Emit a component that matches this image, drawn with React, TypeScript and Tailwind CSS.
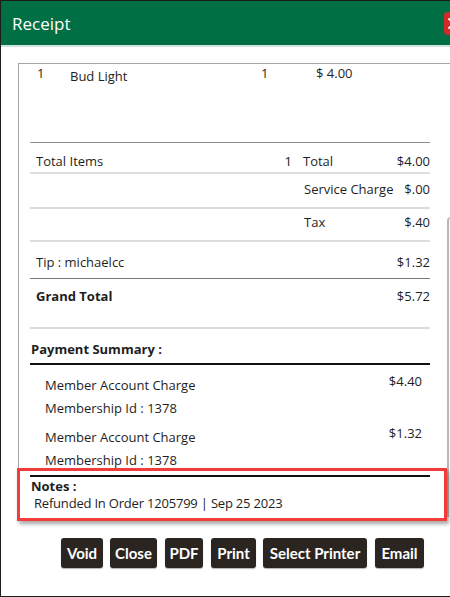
import React from "react";

const body = { fontFamily: '"Open Sans", "Noto Sans", sans-serif' };
const btnFont = { fontFamily: 'Lato, "Open Sans", sans-serif' };

function Btn({ label, w, ml }: { label: string; w: string; ml: string }) {
  return (
    <div
      className={`${w} ${ml} h-[30px] rounded-[3px] bg-[#2b2522] text-white text-[15px] font-bold flex items-center justify-center shadow-[0_1px_1px_rgba(0,0,0,0.3)]`}
      style={btnFont}
    >
      {label}
    </div>
  );
}

export default function App() {
  return (
    <div className="w-[450px] h-[597px] overflow-hidden relative bg-white" style={body}>
      <div className="w-[480px] h-[597px] border border-[#1c1c1c] flex flex-col">
        {/* header */}
        <div className="h-[44px] bg-[#007044] flex items-center pl-[11px] pr-[13px] border-b-2 border-[#cfe4dc] box-content">
          <span className="text-white text-[17px] leading-none pt-[1px]">Receipt</span>
          <div className="ml-auto w-[22px] h-[23px] rounded-[4px] bg-[#d32a2a] flex items-center justify-start pl-[4px]">
            <svg width="11" height="11" viewBox="0 0 11 11">
              <path d="M1 1 L10 10 M10 1 L1 10" stroke="white" strokeWidth="1.8" strokeLinecap="round" />
            </svg>
          </div>
        </div>

        {/* panel */}
        <div className="ml-[17px] mt-[16px] h-[454px] border-l border-t border-[#a6a6a6] flex text-[13px] text-[#1e1e1e]">
          <div className="w-[427px] pl-[11px] pr-[16px] shrink-0">
            {/* items */}
            <div className="h-[78px] flex leading-[18px]">
              <div className="w-[40px] pl-[7px]">1</div>
              <div className="w-[191px] pt-[3px]">Bud Light</div>
              <div className="w-[55px]">1</div>
              <div>$ 4.00</div>
            </div>
            {/* totals */}
            <div className="h-[32px] pt-[9px] border-t border-b-2 border-t-[#8c8c8c] border-b-[#dcdcdc] flex leading-[18px]">
              <div className="w-[262px] pl-[6px] flex justify-between">
                <span>Total Items</span>
                <span>1</span>
              </div>
              <div className="ml-[11px] flex-1">Total</div>
              <div>$4.00</div>
            </div>
            <div className="h-[35px] pt-[6px] border-b-2 border-[#dcdcdc] flex leading-[18px]">
              <div className="ml-[274px] flex-1">Service Charge</div>
              <div>$.00</div>
            </div>
            <div className="h-[33px] pt-[4px] border-b-2 border-[#dcdcdc] flex leading-[18px]">
              <div className="ml-[274px] flex-1">Tax</div>
              <div>$.40</div>
            </div>
            <div className="h-[37px] pt-[11px] border-b border-[#7a7a7a] flex leading-[18px]">
              <div className="pl-[6px] flex-1">Tip : michaelcc</div>
              <div>$1.32</div>
            </div>
            <div className="h-[50px] pt-[8px] border-b-2 border-[#dcdcdc] flex leading-[18px]">
              <div className="pl-[6px] flex-1 font-bold">Grand Total</div>
              <div>$5.72</div>
            </div>
            <div className="h-[36px] pt-[11px] border-b-2 border-[#111] leading-[18px] pl-[1px] font-bold">
              Payment Summary :
            </div>
            <div className="mt-[9px] flex justify-between pl-[15px] pr-[8px]">
              <div className="leading-[23px]">
                <div>Member Account Charge</div>
                <div>Membership Id : 1378</div>
              </div>
              <div className="leading-[15px]">$4.40</div>
            </div>
            <div className="mt-[6px] flex justify-between pl-[15px] pr-[8px]">
              <div className="leading-[23px]">
                <div>Member Account Charge</div>
                <div>Membership Id : 1378</div>
              </div>
              <div className="leading-[15px]">$1.32</div>
            </div>
            <div className="mt-[3px] border-t-2 border-[#111]" />
            <div className="mt-[1px] leading-[17px]">
              <div className="pl-[1px] font-bold">Notes :</div>
              <div className="pl-[4px] tracking-[-0.2px]">Refunded In Order 1205799 | Sep 25 2023</div>
            </div>
          </div>
          {/* scrollbar */}
          <div className="w-[20px] shrink-0 pl-[1px]">
            <div className="mt-[153px] h-[300px] border-l-2 border-t border-[#b8b8b8] rounded-tl-[4px] bg-[#fafafa]" />
          </div>
        </div>

        {/* buttons */}
        <div className="mt-[21px] flex pl-[60px]">
          <Btn label="Void" w="w-[42px]" ml="ml-0" />
          <Btn label="Close" w="w-[47px]" ml="ml-[7px]" />
          <Btn label="PDF" w="w-[38px]" ml="ml-[8px]" />
          <Btn label="Print" w="w-[45px]" ml="ml-[8px]" />
          <Btn label="Select Printer" w="w-[104px]" ml="ml-[7px]" />
          <Btn label="Email" w="w-[49px]" ml="ml-[8px]" />
        </div>
      </div>

      {/* red highlight annotation */}
      <div className="absolute left-[17px] top-[468px] w-[430px] h-[53px] border-[3px] border-[#f23b3b] shadow-[2px_3px_4px_rgba(0,0,0,0.35)]" />
    </div>
  );
}
